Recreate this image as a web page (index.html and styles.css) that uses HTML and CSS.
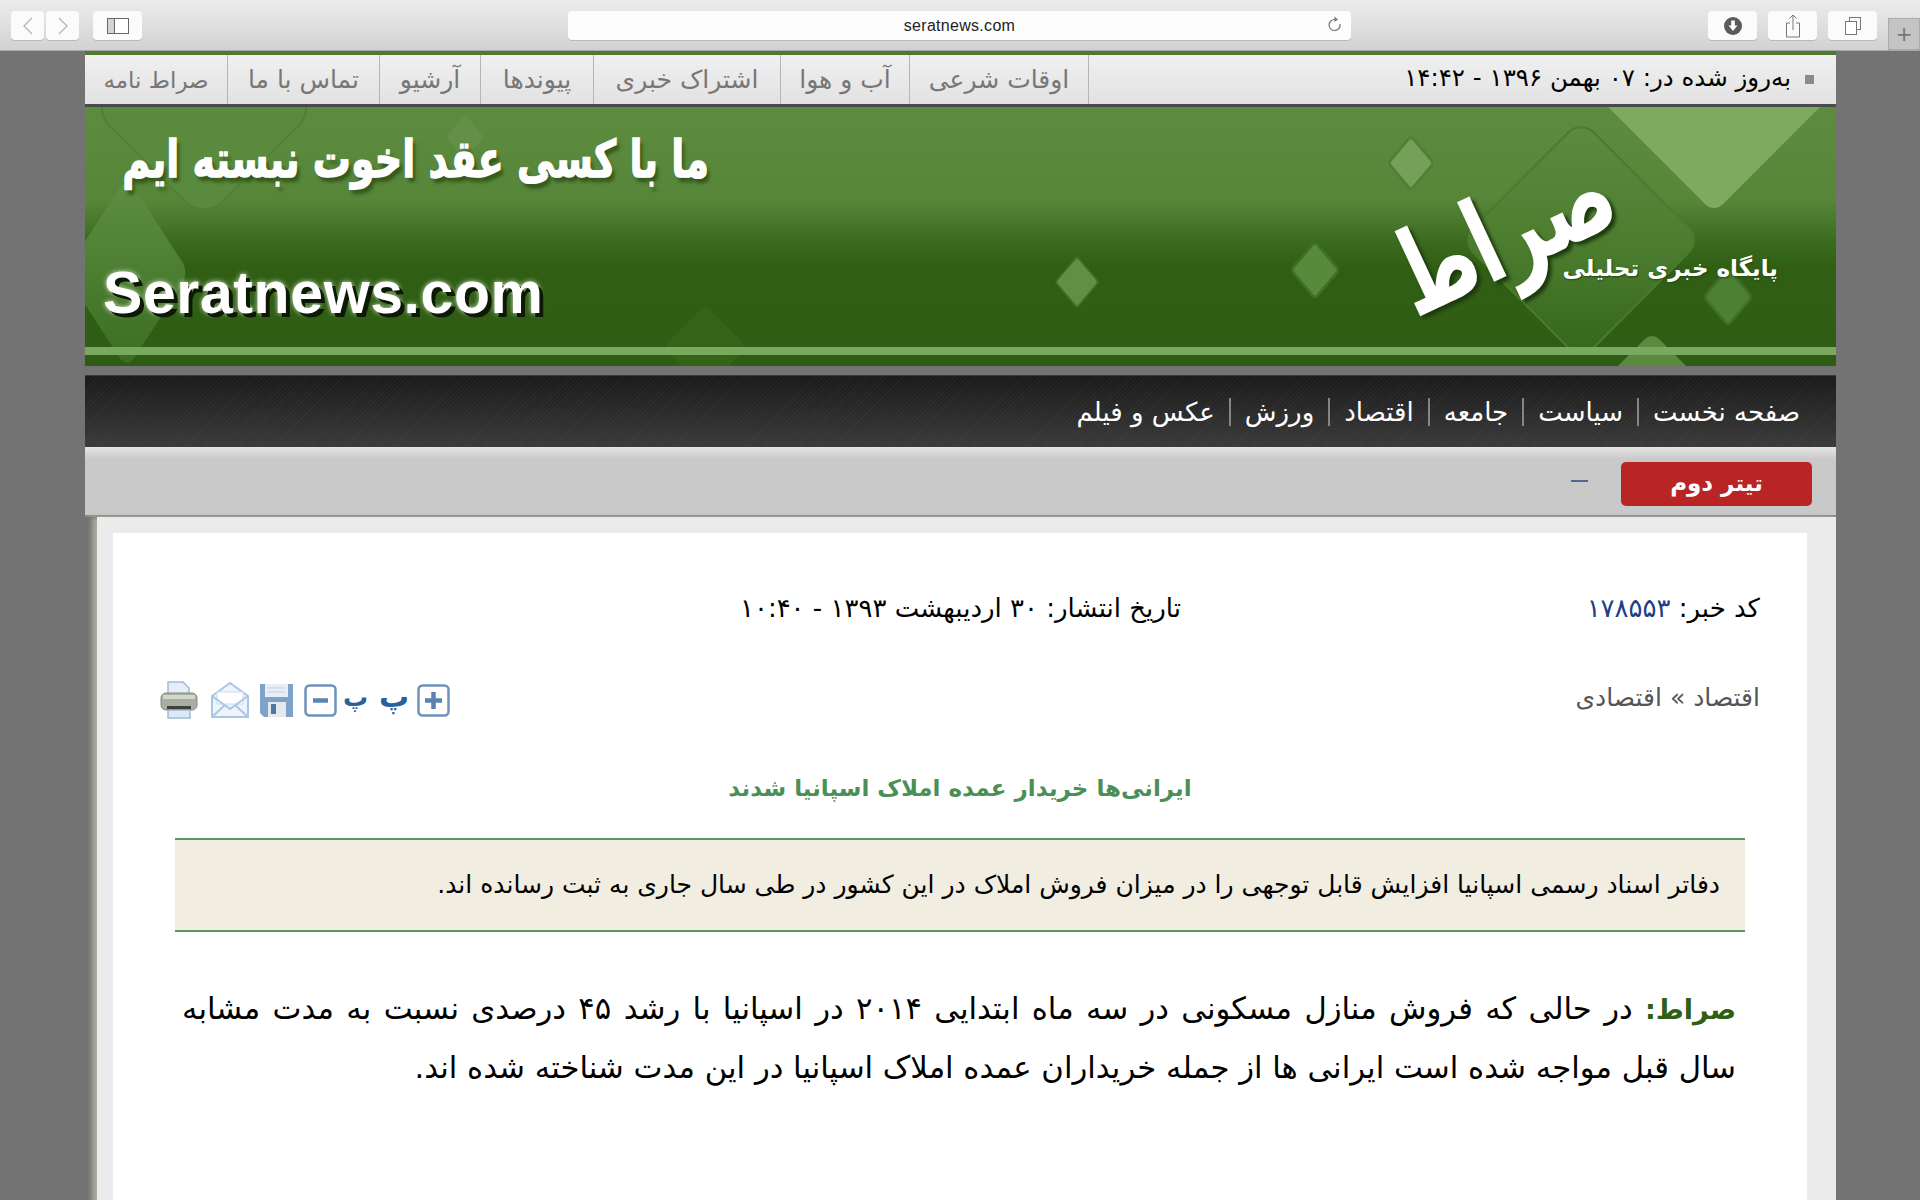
FILE: index.html
```html
<!DOCTYPE html>
<html lang="fa">
<head>
<meta charset="utf-8">
<title>seratnews.com</title>
<link rel="stylesheet" href="styles.css">
</head>
<body>
<header class="toolbar">
  <div class="tb-group tb-nav">
    <span class="tb-btn tb-half"><svg width="12" height="20" viewBox="0 0 12 20"><path d="M10 2 2 10l8 8" fill="none" stroke="#b5b5b5" stroke-width="1.3"/></svg></span>
    <span class="tb-btn tb-half"><svg width="12" height="20" viewBox="0 0 12 20"><path d="m2 2 8 8-8 8" fill="none" stroke="#b5b5b5" stroke-width="1.3"/></svg></span>
    <span class="tb-btn tb-wide tb-side"><svg width="22" height="16" viewBox="0 0 22 16"><rect x=".5" y=".5" width="21" height="15" fill="#fff" stroke="#666"/><rect x="1" y="1" width="6" height="14" fill="#d4d4d4"/><path d="M7.500 1v14" stroke="#666"/></svg></span>
  </div>
  <div class="urlbar">
    <span class="url-text">seratnews.com</span>
    <svg class="url-reload" width="16" height="20" viewBox="0 0 16 20"><path d="M13 9a5.500 5.500 0 1 1-5-4.500" fill="none" stroke="#777" stroke-width="1.200"/><path d="M7.500 1.500 11 4.500 7.500 7z" fill="#777"/></svg>
  </div>
  <div class="tb-group tb-right">
    <span class="tb-btn tb-wide"><svg width="20" height="20" viewBox="0 0 20 20"><circle cx="10" cy="10" r="9" fill="#5a5a5a"/><path d="M8.200 4.500h3.600v5H14.500L10 15 5.500 9.500h2.700z" fill="#fff"/></svg></span>
    <span class="tb-btn tb-wide"><svg width="16" height="26" viewBox="0 0 16 26"><path d="M5 10H1.500v14h13V10H11" fill="none" stroke="#777"/><path d="M8 17V2M4.500 5.500 8 2l3.500 3.500" fill="none" stroke="#777"/></svg></span>
    <span class="tb-btn tb-wide"><svg width="18" height="18" viewBox="0 0 18 18"><rect x="5.500" y=".5" width="11" height="12" fill="none" stroke="#777"/><rect x="1.500" y="4.500" width="11" height="13" fill="#fff" stroke="#777"/></svg></span>
  </div>
  <div class="tb-plus">+</div>
</header>

<div class="page" dir="rtl">
  <div class="topbar">
    <div class="updated"><span class="bullet"></span><span>به‌روز شده در: ۰۷ بهمن ۱۳۹۶ - ۱۴:۴۲</span></div>
    <nav class="toplinks">
      <a class="toplink tl-1">اوقات شرعی</a>
      <a class="toplink tl-2">آب و هوا</a>
      <a class="toplink tl-3">اشتراک خبری</a>
      <a class="toplink tl-4">پیوندها</a>
      <a class="toplink tl-5">آرشیو</a>
      <a class="toplink tl-6">تماس با ما</a>
      <a class="toplink tl-7">صراط نامه</a>
    </nav>
  </div>

  <div class="banner">
    <svg class="banner-art" width="1751" height="259" viewBox="0 0 1751 259">
      <defs>
        <linearGradient id="bg" x1="0" y1="0" x2="0" y2="1">
          <stop offset="0" stop-color="#5d8c40"/>
          <stop offset=".36" stop-color="#578639"/>
          <stop offset=".52" stop-color="#3a6b1e"/>
          <stop offset=".62" stop-color="#305f14"/>
          <stop offset="1" stop-color="#2f5c14"/>
        </linearGradient>
        <linearGradient id="dm" x1="0" y1="0" x2="1" y2="1">
          <stop offset="0" stop-color="#5c8c40"/>
          <stop offset=".5" stop-color="#4d7e30"/>
          <stop offset="1" stop-color="#33651a"/>
        </linearGradient>
        <linearGradient id="lf" x1="0" y1="0" x2="1" y2="1">
          <stop offset="0" stop-color="#5e8f45"/>
          <stop offset="1" stop-color="#3a6d1f"/>
        </linearGradient>
      </defs>
      <rect width="1751" height="259" fill="url(#bg)"/>
      <g transform="translate(119 0) rotate(45)"><rect x="-80" y="-80" width="160" height="160" rx="26" fill="#5a8a3d" stroke="#517f36" stroke-width="2"/></g>
      <g transform="translate(42 166) scale(.65 1) rotate(45)"><rect x="-68" y="-68" width="136" height="136" rx="16" fill="url(#lf)"/></g>
      <g transform="translate(1496 133) rotate(45)"><rect x="-85" y="-85" width="170" height="170" rx="18" fill="url(#dm)" stroke="#4a7b2e" stroke-width="2"/></g>
      <g transform="translate(1629 -10) rotate(45)"><rect x="-82" y="-82" width="164" height="164" rx="12" fill="#7da961"/></g>
      <g transform="translate(1567 290) rotate(45)"><rect x="-46" y="-46" width="92" height="92" rx="10" fill="#598a3d"/></g>
      <g transform="translate(1326 56) scale(.85 1) rotate(45)"><rect x="-19" y="-19" width="38" height="38" rx="4" fill="#74a05a" stroke="#4f8034" stroke-width="3"/></g>
      <g transform="translate(1230 163) scale(.85 1) rotate(45)"><rect x="-20" y="-20" width="40" height="40" rx="4" fill="#588a3c" stroke="#3f7124" stroke-width="3"/></g>
      <g transform="translate(992 175) scale(.85 1) rotate(45)"><rect x="-18" y="-18" width="36" height="36" rx="3" fill="#5f9043" stroke="#3f7124" stroke-width="2"/></g>
      <g transform="translate(1643 190) scale(.85 1) rotate(45)"><rect x="-20" y="-20" width="40" height="40" rx="4" fill="#4d8033" stroke="#3f7124" stroke-width="3"/></g>
      <g transform="translate(380 30) scale(.85 1) rotate(45)"><rect x="-16" y="-16" width="32" height="32" rx="3" fill="#638f49"/></g>
      <g transform="translate(620 240) rotate(45)"><rect x="-30" y="-30" width="60" height="60" rx="8" fill="#336417"/></g>
      <rect y="240" width="1751" height="8" fill="#79a961"/>
    </svg>
    <div class="slogan">ما با کسی عقد اخوت نبسته ایم</div>
    <div class="site-en" dir="ltr">Seratnews.com</div>
    <div class="logo">صراط</div>
    <div class="tagline">پایگاه خبری تحلیلی</div>
  </div>

  <div class="gap"></div>

  <nav class="mainnav">
    <a class="mainlink">صفحه نخست</a>
    <a class="mainlink">سیاست</a>
    <a class="mainlink">جامعه</a>
    <a class="mainlink">اقتصاد</a>
    <a class="mainlink">ورزش</a>
    <a class="mainlink">عکس و فیلم</a>
  </nav>

  <div class="ticker">
    <div class="ticker-label">تیتر دوم</div>
    <div class="ticker-dash"></div>
  </div>

  <main class="outer">
    <article class="sheet">
      <div class="meta">
        <div class="code">کد خبر: <span class="code-num">۱۷۸۵۵۳</span></div>
        <div class="date">تاریخ انتشار: ۳۰ اردیبهشت ۱۳۹۳ - ۱۰:۴۰</div>
      </div>
      <div class="crumb-row">
        <div class="crumb">اقتصاد » اقتصادی</div>
        <div class="tools">
          <svg class="i-plus" width="33" height="33" viewBox="0 0 33 33"><rect x="1.500" y="1.500" width="30" height="30" rx="4" fill="#fff" stroke="#6f92b8" stroke-width="2.500"/><path d="M16.500 8v17M8 16.500h17" stroke="#5b83ad" stroke-width="4.500"/></svg>
          <span class="tool-pe tool-pe-l">پ</span>
          <span class="tool-pe tool-pe-s">پ</span>
          <svg class="i-minus" width="33" height="33" viewBox="0 0 33 33"><rect x="1.500" y="1.500" width="30" height="30" rx="4" fill="#fff" stroke="#6f92b8" stroke-width="2.500"/><path d="M9 16.500h15" stroke="#5b83ad" stroke-width="4.500"/></svg>
          <svg class="i-save" width="33" height="34" viewBox="0 0 33 34"><path d="M0 1h33v33H4l-4-4z" fill="#7ea2c8"/><rect x="5" y="1" width="23" height="13" fill="#e8eef4"/><path d="M7 5h19M7 9h19" stroke="#c4d3e2"/><rect x="8" y="19" width="18" height="15" fill="#e6e9ec"/><rect x="11" y="21" width="5" height="10" fill="#4f78a3"/></svg>
          <svg class="i-mail" width="38" height="36" viewBox="0 0 38 36"><path d="M1 14 19 1l18 13v21H1z" fill="#eef4fa" stroke="#a9c7e4" stroke-width="2"/><path d="M6 10h26v12H6z" fill="#fff" stroke="#c9dcee"/><path d="m1 14 18 13 18-13M1 35l13-12M37 35 24 23" fill="none" stroke="#a9c7e4" stroke-width="2"/></svg>
          <svg class="i-print" width="38" height="38" viewBox="0 0 38 38"><path d="M8 1h15l6 6v10H8z" fill="#e6eff8" stroke="#9dbcdc" stroke-width="1.500"/><rect x="1" y="12" width="36" height="17" rx="5" fill="#a9aea2" stroke="#85897e"/><rect x="3" y="14" width="32" height="4" fill="#d4d7ce"/><rect x="7" y="25" width="24" height="4" fill="#3f423c"/><rect x="8" y="29" width="22" height="8" fill="#dfe9f3" stroke="#9dbcdc" stroke-width="1.500"/></svg>
        </div>
      </div>
      <h1 class="headline">ایرانی‌ها خریدار عمده املاک اسپانیا شدند</h1>
      <p class="summary">دفاتر اسناد رسمی اسپانیا افزایش قابل توجهی را در میزان فروش املاک در این کشور در طی سال جاری به ثبت رسانده اند.</p>
      <p class="body"><strong class="source">صراط:</strong> در حالی که فروش منازل مسکونی در سه ماه ابتدایی ۲۰۱۴ در اسپانیا با رشد ۴۵ درصدی نسبت به مدت مشابه سال قبل مواجه شده است ایرانی ها از جمله خریداران عمده املاک اسپانیا در این مدت شناخته شده اند.</p>
    </article>
  </main>
</div>
</body>
</html>
```
FILE: styles.css
```css
* { box-sizing: border-box; }
html, body { margin: 0; height: 1200px; overflow: hidden; }
body { background: #737373; font-family: "DejaVu Sans", sans-serif; color: #000; }

.toolbar {
  height: 51px;
  display: flex;
  background: linear-gradient(#ececec, #d2d2d2);
  border-bottom: 1px solid #a8a8a8;
  position: relative;
}
.tb-group { display: flex; padding-top: 11px; }
.tb-nav { width: 568px; padding-left: 11px; gap: 2px; }
.tb-btn {
  height: 29px;
  background: #fbfbfb;
  border-radius: 4px;
  box-shadow: 0 1px 0 #b9b9b9;
  display: flex;
  align-items: center;
  justify-content: center;
}
.tb-half { width: 33px; }
.tb-wide { width: 49px; }
.tb-side { margin-left: 12px; }
.urlbar {
  width: 783px;
  height: 29px;
  margin-top: 11px;
  background: #fdfdfd;
  border-radius: 4px;
  box-shadow: 0 1px 0 #b9b9b9;
  display: flex;
  align-items: center;
  justify-content: center;
  position: relative;
}
.url-text { font-family: "Liberation Sans", sans-serif; font-size: 16px; letter-spacing: .3px; color: #222; }
.url-reload { position: absolute; right: 8px; top: 4px; }
.tb-right { margin-left: 357px; gap: 11px; }
.tb-plus {
  width: 32px;
  height: 32px;
  margin-left: 11px;
  margin-top: 18px;
  background: #c4c4c4;
  border: 1px solid #aaa;
  color: #777;
  font: 300 26px/30px "Liberation Sans", sans-serif;
  text-align: center;
}

.page { width: 1751px; margin-left: 85px; }

.topbar {
  height: 57px;
  margin-top: -1px;
  border-top: 5px solid #4d7a2e;
  border-bottom: 3px solid #4a4a4a;
  background: linear-gradient(#f0f0f0, #e2e2e2);
  display: flex;
  justify-content: space-between;
}
.updated {
  display: flex;
  align-items: center;
  gap: 14px;
  padding: 0 22px 5px 0;
  font-size: 24.500px;
}
.bullet { width: 9px; height: 9px; background: #8a8a8a; margin-top: 5px; }
.toplinks { display: flex; }
.toplink {
  display: flex;
  align-items: center;
  justify-content: center;
  color: #777;
  font-size: 25px;
  border-right: 1px solid #b5b5b5;
}
.tl-1 { width: 179px; }
.tl-2 { width: 129px; }
.tl-3 { width: 187px; }
.tl-4 { width: 113px; }
.tl-5 { width: 101px; }
.tl-6 { width: 152px; }
.tl-7 { width: 143px; font-size: 23px; }

.banner { height: 259px; position: relative; overflow: hidden; }
.banner-art { display: block; }
.slogan {
  position: absolute;
  left: 39px;
  top: 30px;
  width: 585px;
  text-align: center;
  white-space: nowrap;
  color: #fff;
  font-size: 38px;
  font-weight: 700;
  transform: scaleY(1.35);
  -webkit-text-stroke: 1px #fff;
  text-shadow: 3px 4px 3px #33591c;
}
.site-en {
  position: absolute;
  left: 18px;
  top: 152px;
  color: #fff;
  font-family: "Liberation Sans", sans-serif;
  font-size: 59px;
  font-weight: 700;
  letter-spacing: .6px;
  text-shadow: 4px 4px 0 #0c1a05, 0 0 5px #d8e6cf;
}
.logo {
  position: absolute;
  left: 1272px;
  top: 50px;
  width: 300px;
  color: #fff;
  font-size: 105px;
  font-weight: 700;
  line-height: 150px;
  text-align: center;
  white-space: nowrap;
  transform: rotate(-25deg) scale(.74, 1.1);
  text-shadow: 3px 4px 4px #1d3a0c;
}
.tagline {
  position: absolute;
  right: 58px;
  top: 148px;
  color: #fff;
  font-size: 23px;
  font-weight: 700;
  white-space: nowrap;
  text-shadow: 1px 1px 2px #24480f;
}

.gap { height: 9px; }

.mainnav {
  height: 72px;
  display: flex;
  align-items: center;
  padding-right: 36px;
  background:
    repeating-linear-gradient(135deg, rgba(255,255,255,.03) 0 1px, transparent 1px 3px),
    linear-gradient(#1a1a1a, #3a3a3a);
  border-top: 1px solid #3a3a3a;
}
.mainlink {
  color: #fff;
  font-size: 26px;
  line-height: 28px;
  padding-left: 14px;
  margin-left: 14px;
  border-left: 2px solid #858585;
}
.mainlink:last-child { border-left: 0; }

.ticker {
  height: 70px;
  display: flex;
  align-items: center;
  padding: 5px 24px 0 0;
  background: linear-gradient(#e6e6e6, #c9c9c9 18%, #c9c9c9);
  border-bottom: 2px solid #8c8c8c;
}
.ticker-label {
  width: 191px;
  height: 44px;
  background: #b92525;
  border-radius: 5px;
  color: #fff;
  font-size: 23px;
  font-weight: 700;
  line-height: 42px;
  text-align: center;
}
.ticker-dash { width: 17px; height: 2px; background: #4d6a8f; margin-right: 33px; margin-top: -6px; }

.outer {
  width: 1739px;
  height: 690px;
  padding: 16px 29px 0 16px;
  background: #ebebeb;
  box-shadow: -5px 0 5px #a8ad9f;
}
.sheet { height: 100%; background: #fff; padding: 0 47px; }

.meta {
  height: 76px;
  padding-top: 59px;
  display: flex;
  font-size: 26px;
  line-height: 32px;
  white-space: nowrap;
}
.code { width: 579px; }
.code-num { color: #1d3f86; }
.crumb-row {
  display: flex;
  justify-content: space-between;
  align-items: center;
  height: 60px;
  margin-top: 58px;
}
.crumb { font-size: 25px; color: #555; }
.tools { display: flex; align-items: center; direction: ltr; flex-direction: row-reverse; padding-top: 6px; }
.tool-pe { color: #2d5f9e; font-weight: 700; line-height: 1; text-align: center; }
.tool-pe-l { width: 28px; font-size: 30px; margin: 0 10px 6px 12px; }
.tool-pe-s { width: 24px; font-size: 25px; margin: 0 0 6px 6px; }
.i-save { margin-left: 11px; }
.i-minus { margin-left: 11px; }
.i-mail { margin-left: 13px; }

.headline {
  margin: 41px 0 0;
  text-align: center;
  color: #4a8f58;
  font-size: 23px;
  line-height: 40px;
  font-weight: 700;
}
.summary {
  margin: 30px 15px 0;
  height: 94px;
  padding: 0 25px;
  background: #f1ede1;
  border-top: 2px solid #5e9660;
  border-bottom: 2px solid #5e9660;
  font-size: 25px;
  line-height: 90px;
  white-space: nowrap;
}
.body {
  margin: 48px 24px 0 22px;
  font-size: 30.700px;
  line-height: 58px;
  text-align: justify;
}
.source { color: #2e5f14; font-size: 27px; }
```
